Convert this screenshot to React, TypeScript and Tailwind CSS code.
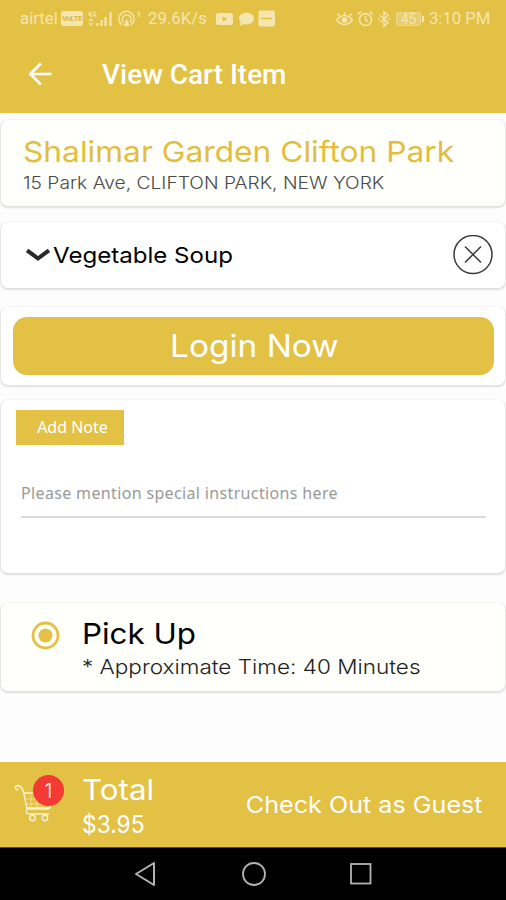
import type { ReactNode } from 'react';

const card = 'mx-px rounded-[7px] shadow-[0_1px_2px_1px_rgba(0,0,0,0.12)]';

function StatusBar() {
  return (
    <div className="flex h-[37px] items-center pl-5 pr-4 text-[#f5e6b0] font-[Roboto,sans-serif] text-[16px] whitespace-nowrap">
      <span className="w-[38px] origin-left scale-x-[1.05]">airtel</span>
      <span className="ml-[3px] flex h-[15px] w-[22px] items-center justify-center rounded-[3px] bg-[#f5e6b0] text-[8px] font-bold tracking-[-0.5px] text-[#d9b83f]">VoLTE</span>
      <svg className="ml-[4px]" width="27" height="18" viewBox="0 0 27 18" fill="none" stroke="currentColor">
        <path d="M2 2v3h3M4 2v5M9 2H7v4h2V4.500" strokeWidth="1.200" />
        <path d="M2 11l2-2 2 2M2 13l2 2 2-2" strokeWidth="1.200" />
        <path d="M10.500 16v-3M14.500 16v-6M18.500 16v-9M23.500 16V2" strokeWidth="2.200" />
      </svg>
      <svg className="ml-[3px]" width="25" height="18" viewBox="0 0 25 18" fill="none" stroke="currentColor" strokeWidth="1.500">
        <path d="M5 15a7.600 7.600 0 1 1 9 0" />
        <path d="M6.500 12.300a4.400 4.400 0 1 1 6.500 0" />
        <path d="M9.700 8.500l-3 7.500h6z" fill="currentColor" strokeWidth="0" />
        <path d="M20.500 3l1.500-1v5" strokeWidth="1.200" />
      </svg>
      <span className="ml-[6px] w-[60px] origin-left scale-x-[1.05]">29.6K/s</span>
      <svg className="ml-[8px]" width="17" height="14" viewBox="0 0 17 14">
        <rect y="1" width="17" height="12" rx="2.500" fill="currentColor" />
        <path d="M6.500 4.500v5l5-2.500z" fill="#e2c145" />
      </svg>
      <svg className="ml-[5px]" width="17" height="16" viewBox="0 0 17 16" fill="currentColor">
        <ellipse cx="8.500" cy="7.500" rx="7.500" ry="6" />
        <path d="M3 10l-1 5 6-3z" />
      </svg>
      <svg className="ml-[3px]" width="18" height="17" viewBox="0 0 18 17">
        <rect x="0.500" y="0.500" width="16.500" height="16" rx="2" fill="currentColor" />
        <path d="M3 8.500h11" stroke="#e2c145" strokeWidth="1.500" />
      </svg>
      <div className="ml-auto flex items-center">
        <svg width="19" height="18" viewBox="0 0 19 18" fill="none" stroke="currentColor" strokeWidth="1.600">
          <path d="M1.500 10q8-9 16 0-8 9-16 0zM9.500 5V2M4.500 6L2.500 3.500M14.500 6l2-2.500" />
          <circle cx="9.500" cy="10" r="2" fill="currentColor" />
        </svg>
        <svg className="ml-[3px]" width="17" height="18" viewBox="0 0 17 18" fill="none" stroke="currentColor" strokeWidth="1.500">
          <circle cx="8.500" cy="9.500" r="6" />
          <path d="M8.500 6v4l2.500 1.500M1 4.500l3-3M16 4.500l-3-3" />
        </svg>
        <svg className="ml-[3px]" width="14" height="18" viewBox="0 0 14 18" fill="none" stroke="currentColor" strokeWidth="1.500">
          <path d="M3 5.500l8 7-4 3.500V2l4 3.500-8 7" />
          <path d="M1.300 9h1.200M11.500 9h1.200" strokeWidth="1.800" />
        </svg>
        <span className="ml-[5px] flex h-[14px] w-[25px] items-center justify-center rounded-[2px] border border-[#efd98f] bg-[#e8cd6c] text-[14px] leading-none">45</span>
        <span className="ml-px h-[6px] w-[2px] bg-current" />
        <span className="ml-[5px] w-[61px] origin-left scale-x-[1.04]">3:10 PM</span>
      </div>
    </div>
  );
}

function Line({ className, children }: { className: string; children: ReactNode }) {
  return <div className={'whitespace-nowrap ' + className}>{children}</div>;
}

export default function App() {
  return (
    <div className="flex h-[900px] w-[506px] flex-col overflow-hidden bg-[#fdfdfd] font-[Inter,sans-serif] text-black">
      <header className="h-[113px] shrink-0 bg-[#e2c145]">
        <StatusBar />
        <div className="flex h-[76px] items-center pl-[28px] text-white">
          <svg className="-mt-[2px]" width="24" height="24" viewBox="0 0 24 24" fill="none" stroke="currentColor" strokeWidth="2.600">
            <path d="M23.500 12H2.500M12.800 1.500L2.300 12l10.500 10.500" />
          </svg>
          <h1 className="ml-[50px] origin-left scale-x-[1.035] font-[Roboto,sans-serif] text-[27px] leading-none font-medium whitespace-nowrap">View Cart Item</h1>
        </div>
      </header>

      <section className={card + ' mt-[7px] h-[86px] shrink-0 bg-[#fffffb] pl-[22px] pt-[14px]'}>
        <Line className="origin-left scale-x-[1.094] text-[29px] leading-[36px] text-[#e2bd3e]">Shalimar Garden Clifton Park</Line>
        <Line className="origin-left scale-x-[1.13] text-[17px] leading-[26px] font-light text-[#4a4a4a]">15 Park Ave, CLIFTON PARK, NEW YORK</Line>
      </section>

      <section className={card + ' mt-[16px] flex h-[66px] shrink-0 items-center bg-white pl-[25px] pr-[12px]'}>
        <svg width="24" height="14" viewBox="0 0 24 14" fill="none" stroke="#292929" strokeWidth="4">
          <path d="M1 2.500Q6 6 12 10.500Q18 6 23 2.500" />
        </svg>
        <Line className="ml-[3px] origin-left scale-x-[1.094] text-[22px]">Vegetable Soup</Line>
        <svg className="ml-auto" width="40" height="40" viewBox="0 0 40 40" fill="none" stroke="#3a3a3a" strokeWidth="1.500">
          <circle cx="20" cy="19.500" r="19" />
          <path d="M12 11.500l16 16M28 11.500l-16 16" />
        </svg>
      </section>

      <section className={card + ' mt-[19px] h-[78px] shrink-0 bg-white px-[12px] pt-[10px]'}>
        <button className="flex h-[58px] w-[481px] items-center justify-center rounded-[14px] bg-[#e2c145] text-[31px] text-white">
          <span className="scale-x-[1.077] pt-px pl-[2px]">Login Now</span>
        </button>
      </section>

      <section className={card + ' mt-[15px] h-[173px] shrink-0 bg-white pl-[15px] pt-[10px]'}>
        <div className="flex h-[35px] w-[108px] items-center justify-center pl-[5px] pb-[2px] bg-[#e2c145] font-['Noto_Sans',sans-serif] text-[16px] text-white whitespace-nowrap">Add Note</div>
        <div className="ml-[5px] mt-[33px] h-[40px] w-[465px] border-b-2 border-[#dadada] pt-[4px] font-['Noto_Sans',sans-serif] text-[16px] leading-[22px] tracking-[0.35px] text-[#999] whitespace-nowrap">Please mention special instructions here</div>
      </section>

      <section className={card + ' mt-[30px] flex h-[88px] shrink-0 bg-[#fffffb] pl-[30px] pt-[12px]'}>
        <svg className="mt-[6px]" width="29" height="29" viewBox="0 0 29 29">
          <circle cx="14.500" cy="14.500" r="12.500" fill="none" stroke="#e2c145" strokeWidth="2.800" />
          <circle cx="14.500" cy="14.500" r="7" fill="#e2c145" />
        </svg>
        <div className="ml-[22px]">
          <Line className="origin-left scale-x-[1.08] text-[29px] leading-[38px]">Pick Up</Line>
          <Line className="origin-left scale-x-[1.127] text-[20px] leading-[28px] font-light text-[#222]">* Approximate Time: 40 Minutes</Line>
        </div>
      </section>

      <footer className="mt-[71px] flex h-[85px] shrink-0 bg-[#e2c145] pl-[14px] text-white">
        <div className="relative h-full w-[50px]">
          <svg className="mt-[21px]" width="40" height="42" viewBox="0 0 40 42" fill="none" stroke="#fcf3cf" strokeWidth="1.400">
            <path d="M4.500 6.500C.5 7 0 2.500 4 2.500 8 3 9 7 10 11l3 15h20q3 0 3-3M10 10h26v15H13M13 26q-2 5 2 5h20" />
            <path d="M17 10v15M23 10v15M29 10v15M12 16h24M12 21h24" strokeWidth="0.500" />
            <circle cx="18.500" cy="35" r="2.700" />
            <circle cx="31" cy="35" r="2.700" />
          </svg>
          <span className="absolute left-[19px] top-[13px] flex h-[31px] w-[31px] items-center justify-center rounded-full bg-[#f43a34] text-[20px] font-light">1</span>
        </div>
        <div className="ml-[18px] pt-[10px]">
          <Line className="origin-left scale-x-[1.08] text-[29px] leading-[36px]">Total</Line>
          <Line className="origin-left scale-x-[0.95] text-[24px] leading-[34px]">$3.95</Line>
        </div>
        <Line className="ml-auto mr-[23px] mt-[26px] origin-right scale-x-[1.093] text-[23px] leading-[34px]">Check Out as Guest</Line>
      </footer>

      <nav className="flex min-h-0 flex-1 items-center border-t border-[#5c4e1c] bg-black pl-[134px] text-[#b3b3b3]">
        <svg width="22" height="26" viewBox="0 0 22 26" fill="none" stroke="currentColor" strokeWidth="2" strokeLinejoin="round">
          <path d="M20 2v22L2 13z" />
        </svg>
        <svg className="ml-[85px]" width="26" height="26" viewBox="0 0 26 26" fill="none" stroke="currentColor" strokeWidth="1.800">
          <circle cx="13" cy="13" r="11" />
        </svg>
        <svg className="ml-[82px]" width="24" height="24" viewBox="0 0 24 24" fill="none" stroke="currentColor" strokeWidth="1.800">
          <rect x="2" y="2" width="19.500" height="19.500" />
        </svg>
      </nav>
    </div>
  );
}
